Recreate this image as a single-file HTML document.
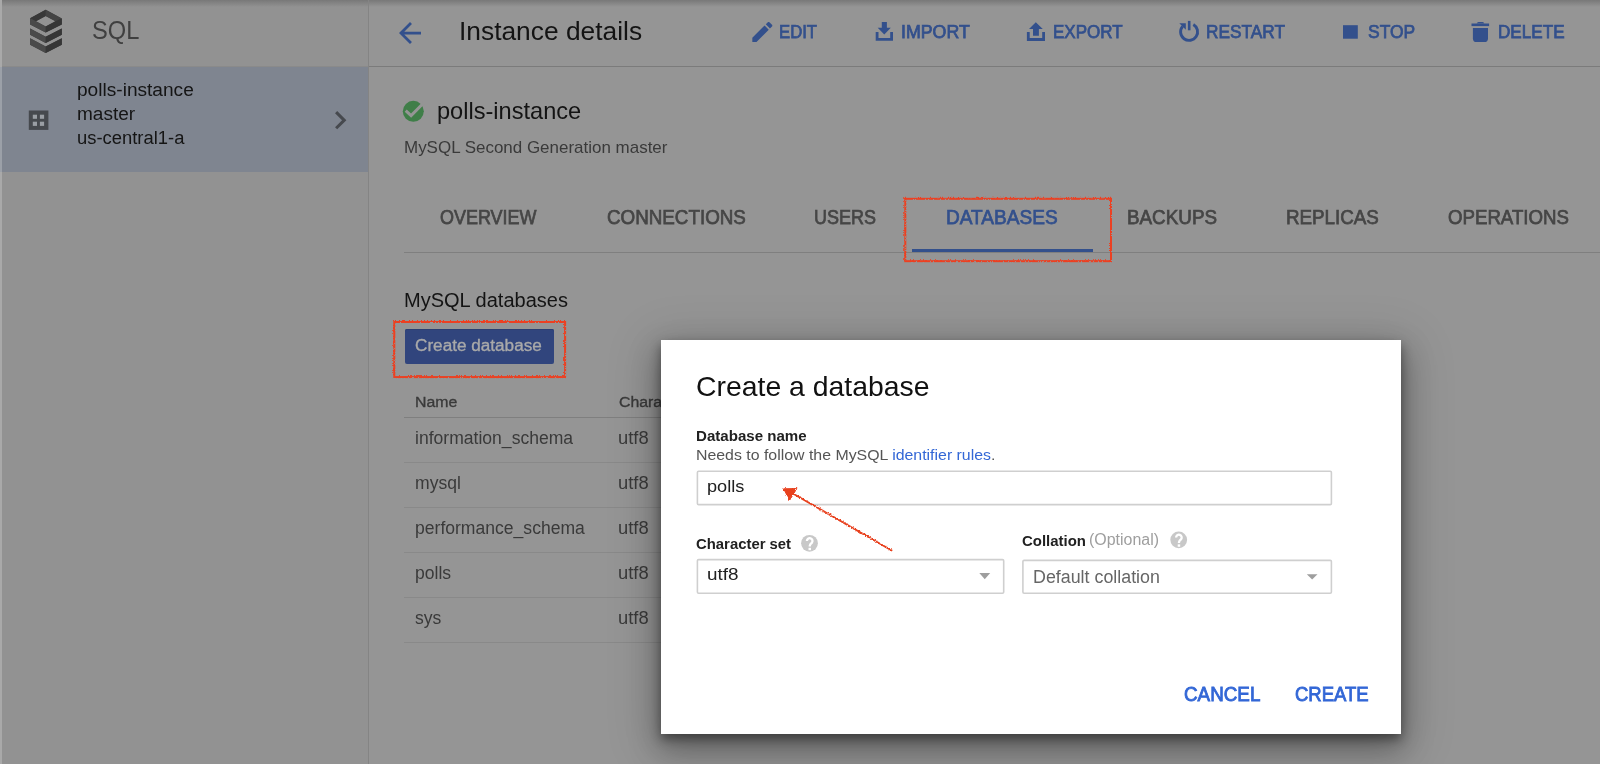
<!DOCTYPE html>
<html><head><meta charset='utf-8'>
<style>
html,body{margin:0;padding:0;}
body{width:1600px;height:764px;overflow:hidden;position:relative;background:#929292;font-family:"Liberation Sans",sans-serif;}
.abs{position:absolute;}
.t{position:absolute;line-height:1;white-space:nowrap;transform-origin:0 0;}
</style></head><body>
<div class='abs' style='left:369px;top:0;width:1231px;height:764px;background:#959595'></div>
<div class='abs' style='left:0;top:0;width:1600px;height:7px;background:linear-gradient(#787878,rgba(147,147,147,0))'></div>
<div class='abs' style='left:0;top:0;width:2px;height:764px;background:#a9a9a9'></div>
<div class='abs' style='left:2px;top:66px;width:366px;height:1px;background:#8a8a8a'></div>
<div class='abs' style='left:2px;top:67px;width:366px;height:105px;background:#7f8590'></div>
<div class='abs' style='left:0;top:67px;width:2px;height:105px;background:#9ba0a8'></div>
<div class='abs' style='left:368px;top:0;width:1px;height:764px;background:#848484'></div>
<div class='abs' style='left:369px;top:66px;width:1231px;height:1px;background:#7b7b7b'></div>
<!-- tab line -->
<div class='abs' style='left:404px;top:252px;width:1196px;height:1px;background:#7f7f7f'></div>
<div class='abs' style='left:912px;top:249px;width:181px;height:3px;background:#33508c'></div>
<!-- create button -->
<div class='abs' style='left:404.5px;top:329px;width:149px;height:35px;background:#31457d;border-radius:2px;box-shadow:inset 0 1px 0 #2b3e72'></div>
<!-- table lines -->
<div class='abs' style='left:404px;top:417px;width:260px;height:1px;background:#7f7f7f'></div>
<div class='abs' style='left:404px;top:462px;width:260px;height:1px;background:#898989'></div>
<div class='abs' style='left:404px;top:507px;width:260px;height:1px;background:#898989'></div>
<div class='abs' style='left:404px;top:552px;width:260px;height:1px;background:#898989'></div>
<div class='abs' style='left:404px;top:597px;width:260px;height:1px;background:#898989'></div>
<div class='abs' style='left:404px;top:642px;width:260px;height:1px;background:#898989'></div>

<svg class='abs' style='left:0;top:0' width='1600' height='764' viewBox='0 0 1600 764'>
 <!-- SQL logo -->
 <g fill='#3e3e3e'>
  <path d='M30.1 18.3 L45.7 9.8 L61.8 18.5 L61.8 24.4 L45.7 32.6 L30.1 24.4 Z M45.7 15.9 L35.9 21.3 L45.7 26.4 L55.5 21.3 Z' fill-rule='evenodd'/>
  <path d='M30.1 28.6 L45.7 36.8 L61.8 28.6 L61.8 34.8 L45.7 42.9 L30.1 34.8 Z'/>
  <path d='M30.1 38.3 L45.7 46.5 L61.8 38.3 L61.8 44.8 L45.7 53 L30.1 44.8 Z'/>
 </g>
 <path d='M30.1 18.3 L45.7 9.8 L45.7 15.9 L35.9 21.3 Z' fill='#383838'/>
 <path d='M45.7 9.8 L61.8 18.5 L55.5 21.3 L45.7 15.9 Z' fill='#444444'/>
 <path d='M30.1 18.3 L35.9 21.3 L45.7 26.4 L45.7 32.6 L30.1 24.4 Z' fill='#4a4a4a'/>
 <path d='M61.8 18.5 L61.8 24.4 L45.7 32.6 L45.7 26.4 L55.5 21.3 Z' fill='#363636'/>
 <path d='M30.1 28.6 L45.7 36.8 L45.7 42.9 L30.1 34.8 Z' fill='#4a4a4a'/>
 <path d='M45.7 36.8 L61.8 28.6 L61.8 34.8 L45.7 42.9 Z' fill='#363636'/>
 <path d='M30.1 38.3 L45.7 46.5 L45.7 53 L30.1 44.8 Z' fill='#4a4a4a'/>
 <path d='M45.7 46.5 L61.8 38.3 L61.8 44.8 L45.7 53 Z' fill='#363636'/>
 <!-- grid icon -->
 <rect x='28.8' y='110.5' width='19.6' height='19.4' fill='#46494e'/>
 <g fill='#9a9ea4'>
  <rect x='32.8' y='114.7' width='4.2' height='4.1'/><rect x='39.9' y='114.7' width='4.2' height='4.1'/>
  <rect x='32.8' y='121.7' width='4.2' height='4.2'/><rect x='39.9' y='121.7' width='4.2' height='4.2'/>
 </g>
 <!-- chevron -->
 <path transform='translate(321.9 101.8) scale(1.53)' d='M10 6L8.59 7.41 13.17 12l-4.58 4.59L10 18l6-6z' fill='#46494e'/>
 <!-- back arrow -->
 <path transform='translate(393.5 16.5) scale(1.375)' d='M20 11H7.83l5.59-5.59L12 4l-8 8 8 8 1.41-1.41L7.83 13H20v-2z' fill='#33508c'/>
 <!-- edit -->
 <path transform='translate(749 18.6) scale(1.11)' d='M3 17.25V21h3.75L17.81 9.94l-3.75-3.75L3 17.25zM20.71 7.04c.39-.39.39-1.02 0-1.41l-2.34-2.34c-.39-.39-1.02-.39-1.41 0l-1.83 1.83 3.75 3.75 1.83-1.83z' fill='#33508c'/>
 <!-- import -->
 <g fill='#33508c'>
  <path d='M881.8 22.1 H886.9 V27.8 H890.8 L884.3 34.5 L877.7 27.8 H881.8 Z'/>
  <path d='M875.7 32.1 H878.5 V38 H890.2 V32.1 H893 V40.7 H875.7 Z'/>
 </g>
 <!-- export -->
 <g fill='#33508c'>
  <path d='M1035.8 22.3 L1042.8 29 H1038.9 V35.8 H1033 V29 H1029 Z'/>
  <path d='M1026.9 32.1 H1029.7 V38.1 H1042.2 V32.1 H1045 V40.9 H1026.9 Z'/>
 </g>
 <!-- restart -->
 <g fill='none' stroke='#33508c' stroke-width='2.9'>
  <path d='M1193.35 24.54 A 8.5 8.5 0 1 1 1182.59 26.44'/>
 </g>
 <g fill='#33508c'>
  <rect x='1187.9' y='20.9' width='2.6' height='9.4'/>
  <path d='M1179.3 23.3 H1185.8 V29.8 Z'/>
 </g>
 <!-- stop -->
 <rect x='1343' y='25.2' width='14.8' height='13.5' fill='#33508c'/>
 <!-- delete -->
 <g fill='#33508c'>
  <rect x='1471.5' y='23.5' width='17.6' height='2.6'/>
  <path d='M1476.8 23.6 V23.4 Q1477 21.9 1478.5 21.9 H1482.5 Q1484.2 21.9 1484.2 23.4 V23.6 Z'/>
  <path d='M1472.9 28 H1488 V38.4 Q1488 42.1 1484.3 42.1 H1476.6 Q1472.9 42.1 1472.9 38.4 Z'/>
 </g>
 <!-- check circle -->
 <circle cx='413.3' cy='111.3' r='10.5' fill='#3f7e48'/>
 <path d='M405.7 110.6 L411.1 115.6 L423.8 102.8' fill='none' stroke='#959595' stroke-width='3' stroke-linejoin='miter'/>
</svg>

<div class='t' style='left:92.08px;top:18.22px;font-size:25.73px;font-weight:400;color:#404040;transform:scaleX(0.9200)'>SQL</div>
<div class='t' style='left:76.60px;top:80.66px;font-size:18px;font-weight:400;color:#151515;transform:scaleX(1.0611)'>polls-instance</div>
<div class='t' style='left:76.60px;top:104.96px;font-size:18px;font-weight:400;color:#151515;transform:scaleX(1.0574)'>master</div>
<div class='t' style='left:76.64px;top:128.56px;font-size:18px;font-weight:400;color:#151515;transform:scaleX(1.0221)'>us-central1-a</div>
<div class='t' style='left:458.52px;top:18.28px;font-size:26.6px;font-weight:400;color:#141414;transform:scaleX(0.9907)'>Instance details</div>
<div class='t' style='left:779.38px;top:22.52px;font-size:18.17px;font-weight:400;-webkit-text-stroke:0.75px currentColor;color:#33508c;transform:scaleX(0.9195)'>EDIT</div>
<div class='t' style='left:901.02px;top:22.52px;font-size:18.17px;font-weight:400;-webkit-text-stroke:0.75px currentColor;color:#33508c;transform:scaleX(0.9786)'>IMPORT</div>
<div class='t' style='left:1053.06px;top:22.52px;font-size:18.17px;font-weight:400;-webkit-text-stroke:0.75px currentColor;color:#33508c;transform:scaleX(0.9365)'>EXPORT</div>
<div class='t' style='left:1206.05px;top:22.52px;font-size:18.17px;font-weight:400;-webkit-text-stroke:0.75px currentColor;color:#33508c;transform:scaleX(0.9512)'>RESTART</div>
<div class='t' style='left:1367.84px;top:22.52px;font-size:18.17px;font-weight:400;-webkit-text-stroke:0.75px currentColor;color:#33508c;transform:scaleX(0.9604)'>STOP</div>
<div class='t' style='left:1497.76px;top:22.52px;font-size:18.17px;font-weight:400;-webkit-text-stroke:0.75px currentColor;color:#33508c;transform:scaleX(0.9420)'>DELETE</div>
<div class='t' style='left:437.09px;top:99.69px;font-size:23.4px;font-weight:400;color:#141414;transform:scaleX(1.0085)'>polls-instance</div>
<div class='t' style='left:404.30px;top:139.01px;font-size:17px;font-weight:400;color:#3a3a3a;transform:scaleX(0.9981)'>MySQL Second Generation master</div>
<div class='t' style='left:439.70px;top:207.25px;font-size:20.5px;font-weight:400;-webkit-text-stroke:0.75px currentColor;color:#464646;transform:scaleX(0.8757)'>OVERVIEW</div>
<div class='t' style='left:606.88px;top:207.25px;font-size:20.5px;font-weight:400;-webkit-text-stroke:0.75px currentColor;color:#464646;transform:scaleX(0.9167)'>CONNECTIONS</div>
<div class='t' style='left:814.12px;top:207.25px;font-size:20.5px;font-weight:400;-webkit-text-stroke:0.75px currentColor;color:#464646;transform:scaleX(0.8783)'>USERS</div>
<div class='t' style='left:945.77px;top:207.25px;font-size:20.5px;font-weight:400;-webkit-text-stroke:0.75px currentColor;color:#33508c;transform:scaleX(0.9303)'>DATABASES</div>
<div class='t' style='left:1126.58px;top:207.25px;font-size:20.5px;font-weight:400;-webkit-text-stroke:0.75px currentColor;color:#464646;transform:scaleX(0.9186)'>BACKUPS</div>
<div class='t' style='left:1286.08px;top:207.25px;font-size:20.5px;font-weight:400;-webkit-text-stroke:0.75px currentColor;color:#464646;transform:scaleX(0.9160)'>REPLICAS</div>
<div class='t' style='left:1448.40px;top:207.25px;font-size:20.5px;font-weight:400;-webkit-text-stroke:0.75px currentColor;color:#464646;transform:scaleX(0.9098)'>OPERATIONS</div>
<div class='t' style='left:404.00px;top:290.17px;font-size:20px;font-weight:400;color:#141414;transform:scaleX(1.0012)'>MySQL databases</div>
<div class='t' style='left:415.21px;top:337.16px;font-size:17.3px;font-weight:400;-webkit-text-stroke:0.35px currentColor;color:#a9a9a9;transform:scaleX(0.9921)'>Create database</div>
<div class='t' style='left:415.48px;top:394.28px;font-size:15.5px;font-weight:400;-webkit-text-stroke:0.35px currentColor;color:#3a3a3a;transform:scaleX(1.0225)'>Name</div>
<div class='t' style='left:618.58px;top:394.28px;font-size:15.5px;font-weight:400;-webkit-text-stroke:0.35px currentColor;color:#3a3a3a;transform:scaleX(1.0225)'>Character set</div>
<div class='t' style='left:415.30px;top:429.90px;font-size:17.6px;font-weight:400;color:#3a3a3a;transform:scaleX(0.9981)'>information_schema</div>
<div class='t' style='left:415.30px;top:474.90px;font-size:17.6px;font-weight:400;color:#3a3a3a;transform:scaleX(0.9981)'>mysql</div>
<div class='t' style='left:415.30px;top:519.90px;font-size:17.6px;font-weight:400;color:#3a3a3a;transform:scaleX(0.9981)'>performance_schema</div>
<div class='t' style='left:415.30px;top:564.90px;font-size:17.6px;font-weight:400;color:#3a3a3a;transform:scaleX(0.9981)'>polls</div>
<div class='t' style='left:415.30px;top:609.90px;font-size:17.6px;font-weight:400;color:#3a3a3a;transform:scaleX(0.9981)'>sys</div>
<div class='t' style='left:618.46px;top:429.90px;font-size:17.6px;font-weight:400;color:#3a3a3a;transform:scaleX(1.0429)'>utf8</div>
<div class='t' style='left:618.46px;top:474.90px;font-size:17.6px;font-weight:400;color:#3a3a3a;transform:scaleX(1.0429)'>utf8</div>
<div class='t' style='left:618.46px;top:519.90px;font-size:17.6px;font-weight:400;color:#3a3a3a;transform:scaleX(1.0429)'>utf8</div>
<div class='t' style='left:618.46px;top:564.90px;font-size:17.6px;font-weight:400;color:#3a3a3a;transform:scaleX(1.0429)'>utf8</div>
<div class='t' style='left:618.46px;top:609.90px;font-size:17.6px;font-weight:400;color:#3a3a3a;transform:scaleX(1.0429)'>utf8</div>
<!-- dialog -->
<div class='abs' style='left:661px;top:340px;width:740px;height:394px;background:#fff;box-shadow:0 5px 10px 0 rgba(0,0,0,.4),0 14px 28px 3px rgba(0,0,0,.26),0 9px 46px 8px rgba(0,0,0,.15)'></div>
<svg class='abs' style='left:0;top:0' width='1600' height='764' viewBox='0 0 1600 764'>
 <g fill='none' stroke='#cfcfcf' stroke-width='1.6'>
  <rect x='697.4' y='471.2' width='634' height='33.4' rx='1.2'/>
  <rect x='697.4' y='559.6' width='306.3' height='33.6' rx='1.2'/>
  <rect x='1022.9' y='560.4' width='308.5' height='32.8' rx='1.2'/>
 </g>
 <g transform='translate(0 0)'><circle cx='809.5' cy='543.3' r='8.4' fill='#c8c8c8'/><path d='M806.9 541 A2.8 2.8 0 1 1 811.9 542.7 Q810.1 544 809.8 545.6 L809.8 546.4' fill='none' stroke='#fff' stroke-width='2.3'/><rect x='808.5' y='547.8' width='2.5' height='2.4' fill='#fff'/></g>
 <g transform='translate(369.2 -3.45)'><circle cx='809.5' cy='543.3' r='8.4' fill='#c8c8c8'/><path d='M806.9 541 A2.8 2.8 0 1 1 811.9 542.7 Q810.1 544 809.8 545.6 L809.8 546.4' fill='none' stroke='#fff' stroke-width='2.3'/><rect x='808.5' y='547.8' width='2.5' height='2.4' fill='#fff'/></g>
 <path d='M979.3 573 H990.2 L984.75 579.2 Z' fill='#9e9e9e'/>
 <path d='M1306.8 574.3 H1317.5 L1312.15 579.5 Z' fill='#9e9e9e'/>
</svg>
<div class='t' style='left:695.89px;top:372.76px;font-size:28.05px;font-weight:400;color:#111111;transform:scaleX(1.0118)'>Create a database</div>
<div class='t' style='left:696.01px;top:428.13px;font-size:15.2px;font-weight:700;color:#212121;transform:scaleX(0.9927)'>Database name</div>
<div class='t' style='left:695.98px;top:447.38px;font-size:15.5px;font-weight:400;color:#555555;transform:scaleX(1.0241)'>Needs to follow the MySQL <span style='color:#3367d6'>identifier rules</span>.</div>
<div class='t' style='left:707.25px;top:477.86px;font-size:17.3px;font-weight:400;color:#212121;transform:scaleX(1.0500)'>polls</div>
<div class='t' style='left:696.02px;top:535.83px;font-size:15.2px;font-weight:700;color:#212121;transform:scaleX(0.9792)'>Character set</div>
<div class='t' style='left:707.21px;top:565.76px;font-size:17.3px;font-weight:400;color:#212121;transform:scaleX(1.0926)'>utf8</div>
<div class='t' style='left:1022.02px;top:532.63px;font-size:15.2px;font-weight:700;color:#212121;transform:scaleX(0.9841)'>Collation</div>
<div class='t' style='left:1089.18px;top:532.29px;font-size:15.6px;font-weight:400;color:#9e9e9e;transform:scaleX(1.0224)'>(Optional)</div>
<div class='t' style='left:1033.49px;top:568.80px;font-size:17.6px;font-weight:400;color:#666666;transform:scaleX(1.0138)'>Default collation</div>
<div class='t' style='left:1184.40px;top:685.40px;font-size:19.91px;font-weight:400;-webkit-text-stroke:0.85px currentColor;color:#3367d6;transform:scaleX(0.9457)'>CANCEL</div>
<div class='t' style='left:1295.30px;top:685.40px;font-size:19.91px;font-weight:400;-webkit-text-stroke:0.85px currentColor;color:#3367d6;transform:scaleX(0.9291)'>CREATE</div>
<!-- annotations -->
<svg class='abs' style='left:0;top:0' width='1600' height='764' viewBox='0 0 1600 764'>
 <defs><filter id='rough' filterUnits='userSpaceOnUse' x='0' y='0' width='1600' height='764'><feTurbulence type='turbulence' baseFrequency='0.6' numOctaves='1' seed='5' result='n'/><feDisplacementMap in='SourceGraphic' in2='n' scale='2.2' xChannelSelector='R' yChannelSelector='G'/></filter></defs>
 <g filter='url(#rough)'>
 <rect x='904.3' y='197.8' width='205.7' height='62.4' fill='none' stroke='#ec4020' stroke-width='2'/>
 <rect x='393.3' y='321' width='170.8' height='55.1' fill='none' stroke='#ec4020' stroke-width='2'/>
 <path d='M782.7 487.8 L795.8 487.6 L788.5 499.4 Z' fill='#e8401f' stroke='#e8401f' stroke-width='1' stroke-linejoin='round'/>
 <path d='M791 492 L891.2 549.8' stroke='#e8401f' stroke-width='1.9'/>
 </g>
</svg>
</body></html>
